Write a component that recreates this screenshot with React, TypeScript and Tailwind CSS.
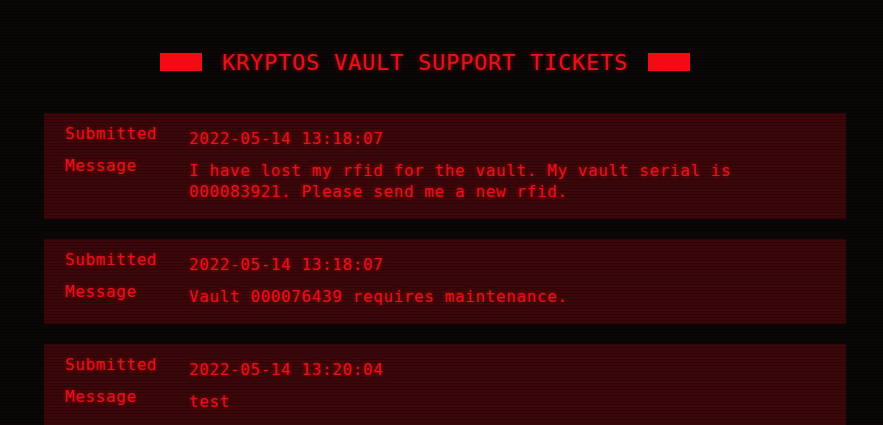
const tickets = [
  {
    submitted: "2022-05-14 13:18:07",
    message: "I have lost my rfid for the vault. My vault serial is 000083921. Please send me a new rfid.",
  },
  {
    submitted: "2022-05-14 13:18:07",
    message: "Vault 000076439 requires maintenance.",
  },
  {
    submitted: "2022-05-14 13:20:04",
    message: "test",
  },
]

const Row = ({ label, value }: { label: string; value: string }) => {
  return (
    <div className="flex items-start pb-[6px]">
      <div className="w-[124px] shrink-0 leading-[21px]">{label}</div>
      <div className="w-[560px] pt-[5px] leading-[21px]">{value}</div>
    </div>
  )
}

const App = () => {
  return (
    <div className="min-h-[425px] w-[883px] overflow-hidden bg-[#0b0707] bg-[repeating-linear-gradient(0deg,rgba(0,0,0,0.45)_0px,rgba(0,0,0,0.45)_1px,transparent_1px,transparent_3px)] pt-[44px] font-['DejaVu_Sans_Mono',monospace] text-[#e8101c] [text-shadow:0_0_4px_rgba(255,20,20,0.6)]">
      <div className="flex h-[36px] w-[850px] items-center justify-center">
        <div className="h-[18px] w-[42px] bg-[#f20a14]" />
        <h1 className="mx-[20px] pt-[2px] text-[22px] leading-none tracking-[0.75px]">
          KRYPTOS VAULT SUPPORT TICKETS
        </h1>
        <div className="h-[18px] w-[42px] bg-[#f20a14]" />
      </div>

      <div className="mt-[33px] ml-[44px] flex w-[802px] flex-col gap-[20px] text-[16px] tracking-[0.6px]">
        {tickets.map((t, i) => (
          <div
            key={i}
            className="bg-[#3c070a] bg-[repeating-linear-gradient(0deg,rgba(0,0,0,0.25)_0px,rgba(0,0,0,0.25)_1px,transparent_1px,transparent_3px)] pt-[10px] pb-[11px] pl-[21px]"
          >
            <Row label="Submitted" value={t.submitted} />
            <Row label="Message" value={t.message} />
          </div>
        ))}
      </div>
    </div>
  )
}

export default App
